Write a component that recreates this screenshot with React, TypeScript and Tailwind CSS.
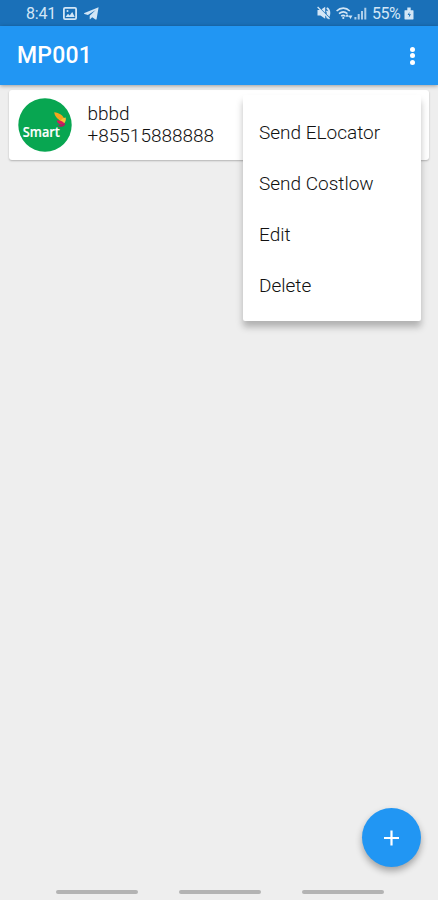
import React from 'react';

interface Contact {
  name: string;
  phone: string;
}

const contacts: Contact[] = [{ name: 'bbbd', phone: '+85515888888' }];

const menuItems = ['Send ELocator', 'Send Costlow', 'Edit', 'Delete'];

const StatusBar: React.FC = () => (
  <div className="flex h-[26px] shrink-0 items-center bg-[#1a70b8] pl-[26px] pr-[24px] text-[16px] text-[#d3e6f6]">
    <span className="w-[30px] whitespace-nowrap pt-[2px] leading-none tracking-[-0.2px]">8:41</span>
    <svg className="ml-[7px] mt-[1px]" width="14" height="13" viewBox="0 0 14 13" fill="none" stroke="currentColor">
      <rect x="0.9" y="0.9" width="12.2" height="11.2" rx="1.2" strokeWidth="1.8" />
      <path d="M2.5 10 5 6.8l1.7 1.7L9.2 5l2.6 5Z" fill="currentColor" stroke="none" />
      <circle cx="4.5" cy="4.1" r="1" fill="currentColor" stroke="none" />
    </svg>
    <svg className="ml-[7px] mt-[1px]" width="15" height="13" viewBox="0 0 15 13" fill="currentColor">
      <path d="M14.6.3.4 6.1c-.5.2-.5.6 0 .8l3.5 1.2L11.7 3 5.7 8.8v3.1c0 .5.4.5.7.2l1.8-1.8 3.3 2.3c.6.3 1 .1 1.1-.6Z" />
    </svg>
    <svg className="ml-auto" width="14" height="14" viewBox="0 0 14 14" fill="currentColor">
      <path d="M.5 4h3L8.2.7v12L3.5 9.5h-3Z" />
      <path d="M9.7 2c3.6 1.5 3.6 8.500 0 10M9.500 5c1.600 1 1.600 3 0 4" fill="none" stroke="currentColor" strokeWidth="1.800" />
      <path d="M1.5.8 13 12.3" fill="none" stroke="#1a70b8" strokeWidth="1.1" />
      <path d="M.6 1 12.5 13" fill="none" stroke="currentColor" strokeWidth="1.3" />
    </svg>
    <svg className="ml-[5px] mt-[1px]" width="17" height="14" viewBox="0 0 17 14" fill="none" stroke="currentColor">
      <path d="M.6 4c4-3.8 9.4-3.8 13.2 0M3 6.7c2.7-2.2 5.9-2.2 8.4 0M5.2 9.2c1.3-1 2.7-1 4 0" strokeWidth="1.6" />
      <circle cx="7.3" cy="11" r="1.1" fill="currentColor" stroke="none" />
      <path d="m9.2 9.8 1.9-2.8L13 9.8ZM12.400 8.500l2.100 3.500 2-3.500Z" fill="currentColor" stroke="none" />
    </svg>
    <svg className="ml-[1px]" width="13" height="13" viewBox="0 0 13 13" fill="currentColor">
      <path d="M.4 10h2v2.5h-2ZM3.700 7h2v5.500h-2ZM7 4h2v8.500H7ZM10.300.7h2v11.800h-2Z" opacity=".8" />
    </svg>
    <span className="ml-[5px] w-[29px] whitespace-nowrap pt-[2px] text-[16px] leading-none tracking-[-0.5px]">55%</span>
    <svg className="ml-[3px] mt-[1px]" width="10" height="13" viewBox="0 0 10 13" fill="currentColor">
      <path d="M3.3.5h3.4v2.7H9c.3 0 .5.2.5.5v8.300c0 .3-.2.5-.5.500H1c-.3 0-.5-.2-.5-.500V3.700c0-.3.2-.5.5-.500h2.300Z" />
      <path d="M5.400 5 3.600 8h1.500l-.3 2.400L7 7.300H5.200Z" fill="#1a70b8" />
    </svg>
  </div>
);

const SmartLogo: React.FC = () => (
  <svg width="54" height="54" viewBox="0 0 54 54">
    <circle cx="27" cy="27" r="26.7" fill="#08a651" />
    <path d="M36.2 14.2c4.800.5 9.300 3 10.300 7.300l-3.700 2.700c-1.600-3.400-5.800-4.200-6.600-10Z" fill="#f6a51d" />
    <path d="M42.500 23.500c.6-2.200 2.400-3.700 5.200-4 .6 2.700-.5 5.400-2.500 6.700Z" fill="#f7c23c" />
    <path d="M38.600 22.700c3.200-.8 6.200.3 7.900 3-2.200 1.700-6 1.400-7.900-3Z" fill="#d91b5c" />
    <path d="M39.500 27.400c2.500 0 5.300-.9 7.800-2.400.2 3.400-3.800 5.400-7.800 2.400Z" fill="#b01c63" />
    <text
      x="4.8"
      y="38.8"
      fill="#fff"
      fontFamily='"Open Sans", "Noto Sans", sans-serif'
      fontSize="14"
      fontWeight="600"
      stroke="#fff"
      strokeWidth="0.2"
      textLength="37"
      lengthAdjust="spacingAndGlyphs"
    >
      Smart
    </text>
  </svg>
);

const ContactCard: React.FC<{ contact: Contact }> = ({ contact }) => (
  <div className="flex h-[70px] items-center rounded-[3px] bg-white pl-[8.5px] shadow-[0_1px_2px_rgba(0,0,0,0.25)]">
    <SmartLogo />
    <div className="ml-4 text-[19px] font-light leading-[22px] text-[#111]">
      <div>{contact.name}</div>
      <div>{contact.phone}</div>
    </div>
  </div>
);

const PopupMenu: React.FC = () => (
  <ul className="absolute right-[17px] top-[95px] z-20 h-[226px] w-[178px] rounded-[2px] bg-white pt-[13px] text-[19px] text-[#111] shadow-[0_6px_7px_rgba(0,0,0,0.26)]">
    {menuItems.map((item) => (
      <li key={item} className="flex h-[51px] items-center whitespace-nowrap pl-[16px] font-light">
        {item}
      </li>
    ))}
  </ul>
);

export default function App() {
  return (
    <div className='relative flex h-[900px] w-full flex-col overflow-hidden bg-[#eeeeee] font-["Roboto",sans-serif]'>
      <StatusBar />
      <header className="z-10 flex h-[59px] shrink-0 items-center justify-between bg-[#2196f3] pl-[17px] pr-[23px] text-white shadow-[0_1px_4px_rgba(0,0,0,0.35)]">
        <h1 className="pt-[2px] text-[23px] font-medium tracking-[0.2px]">MP001</h1>
        <button aria-label="More options" className="flex w-[5px] flex-col gap-[1.5px]">
          <span className="size-[5px] rounded-full bg-white" />
          <span className="size-[5px] rounded-full bg-white" />
          <span className="size-[5px] rounded-full bg-white" />
        </button>
      </header>
      <main className="flex-1 px-[9px] pt-[5px]">
        {contacts.map((contact) => (
          <ContactCard key={contact.phone} contact={contact} />
        ))}
      </main>
      <PopupMenu />
      <button
        aria-label="Add"
        className="absolute bottom-[33px] right-[17px] flex size-[59px] items-center justify-center rounded-full bg-[#2196f3] shadow-[0_4px_7px_rgba(0,0,0,0.32)]"
      >
        <svg width="16" height="16" viewBox="0 0 16 16" stroke="#fff" strokeWidth="2.2">
          <path d="M7.5 0.5v15M0 8h15" />
        </svg>
      </button>
      <nav className="flex h-[16px] shrink-0 justify-center gap-[41px] pl-[1px] pt-[6px]">
        <span className="h-[4px] w-[82px] rounded-full bg-[#b3b3b3]" />
        <span className="h-[4px] w-[82px] rounded-full bg-[#b3b3b3]" />
        <span className="h-[4px] w-[82px] rounded-full bg-[#b3b3b3]" />
      </nav>
    </div>
  );
}
